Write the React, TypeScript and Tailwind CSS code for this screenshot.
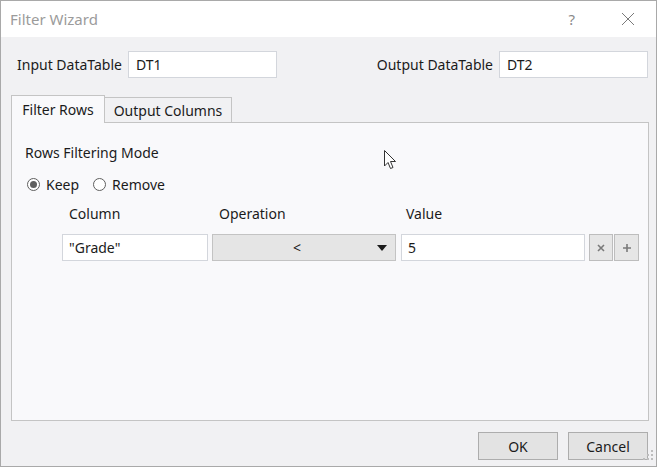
import React from "react";

const font = { fontFamily: '"Noto Sans", "Open Sans", sans-serif' };

function Radio({ checked, label }: { checked?: boolean; label: string }) {
  return (
    <div className="flex items-center gap-[6px]">
      <span className="w-[13px] h-[13px] rounded-full border border-[#5f5f5f] bg-white flex items-center justify-center">
        {checked && <span className="w-[7px] h-[7px] rounded-full bg-[#5f5f5f]" />}
      </span>
      <span>{label}</span>
    </div>
  );
}

export default function App() {
  return (
    <div
      className="w-[660px] h-[468px] bg-white relative overflow-hidden text-[14px] text-[#1b1b1b]"
      style={font}
    >
      <div className="w-[657px] h-[467px] border border-[#a9a9a9] flex flex-col bg-[#f1f1f3]">
        {/* Title bar */}
        <div className="h-[36px] bg-white flex items-center shrink-0">
          <span className="ml-[9px] text-[15px] text-[#9b9b9b]">Filter Wizard</span>
          <span className="ml-auto mr-[46px] text-[15px] text-[#8a8a8a]">?</span>
          <svg width="14" height="14" viewBox="0 0 14 14" className="mr-[21px]">
            <path d="M1 1 L13 13 M13 1 L1 13" stroke="#7a7a7a" strokeWidth="1" />
          </svg>
        </div>
        {/* Body */}
        <div className="flex-1 flex flex-col pl-[10px] pr-[7px] pt-[14px]">
          <div className="flex items-center justify-between pl-[6px]">
            <div className="flex items-center gap-[6px]">
              <span>Input DataTable</span>
              <div className="w-[149px] h-[27px] bg-white border border-[#d3d6dc] flex items-center px-[7px]">DT1</div>
            </div>
            <div className="flex items-center gap-[6px] mr-[1px]">
              <span>Output DataTable</span>
              <div className="w-[149px] h-[27px] bg-white border border-[#d3d6dc] flex items-center px-[7px]">DT2</div>
            </div>
          </div>
          {/* Tabs */}
          <div className="mt-[16px] flex items-end h-[28px]">
            <div className="h-[28px] w-[94px] bg-[#f9f9fb] border border-[#c4c4c4] border-b-0 flex items-center justify-center relative z-10 mb-[-1px] pb-[1px]">
              Filter Rows
            </div>
            <div className="h-[25px] w-[127px] bg-[#f1f1f3] border border-[#c4c4c4] border-b-0 border-l-0 flex items-center justify-center">
              Output Columns
            </div>
          </div>
          <div className="h-[299px] bg-[#f9f9fb] border border-[#c4c4c4] pl-[13px] pt-[20px]">
            <div className="h-[20px] leading-[20px]">Rows Filtering Mode</div>
            <div className="mt-[11px] flex items-center gap-[14px] h-[20px] pl-[2px]">
              <Radio checked label="Keep" />
              <Radio label="Remove" />
            </div>
            <div className="mt-[10px] grid grid-cols-[146px_184px_185px_24px_24px] gap-x-[4px] pl-[37px]">
              <div className="h-[20px] leading-[20px] pl-[7px]">Column</div>
              <div className="h-[20px] leading-[20px] pl-[7px]">Operation</div>
              <div className="h-[20px] leading-[20px] pl-[5px] ml-[1px]">Value</div>
              <div />
              <div />
              <div className="mt-[10px] h-[27px] bg-white border border-[#d3d6dc] flex items-center px-[6px]">"Grade"</div>
              <div className="mt-[10px] h-[27px] bg-[#e5e5e5] border border-[#c3c3c3] flex items-center relative">
                <span className="flex-1 text-center pl-[4px]">&lt;</span>
                <svg width="10" height="6" viewBox="0 0 10 6" className="mr-[8px]">
                  <path d="M0 0 L10 0 L5 6 Z" fill="#1b1b1b" />
                </svg>
              </div>
              <div className="mt-[10px] h-[27px] bg-white border border-[#d3d6dc] flex items-center px-[6px] ml-[1px]">5</div>
              <div className="mt-[10px] h-[27px] bg-[#e6e6e6] border border-[#bdbdbd] flex items-center justify-center">
                <svg width="8" height="8" viewBox="0 0 8 8">
                  <path d="M1 1 L7 7 M7 1 L1 7" stroke="#7a7a7a" strokeWidth="1.6" />
                </svg>
              </div>
              <div className="mt-[10px] h-[27px] bg-[#e6e6e6] border border-[#bdbdbd] flex items-center justify-center ml-[-3px] mr-[2px]">
                <svg width="10" height="10" viewBox="0 0 10 10">
                  <path d="M5 1 L5 9 M1 5 L9 5" stroke="#7a7a7a" strokeWidth="1.6" />
                </svg>
              </div>
            </div>
          </div>
          {/* Footer */}
          <div className="mt-[11px] flex justify-end gap-[10px] pr-[1px]">
            <button className="w-[80px] h-[28px] bg-[#e3e3e3] border border-[#adadad] flex items-center justify-center">OK</button>
            <button className="w-[80px] h-[28px] bg-[#e3e3e3] border border-[#adadad] flex items-center justify-center">Cancel</button>
          </div>
        </div>
      </div>
      {/* resize grip */}
      <svg width="12" height="12" viewBox="0 0 12 12" className="absolute left-[642px] top-[449px]">
        <rect x="9" y="1" width="2" height="2" fill="#bdbdbd" />
        <rect x="5" y="5" width="2" height="2" fill="#bdbdbd" />
        <rect x="9" y="5" width="2" height="2" fill="#bdbdbd" />
        <rect x="1" y="9" width="2" height="2" fill="#bdbdbd" />
        <rect x="5" y="9" width="2" height="2" fill="#bdbdbd" />
        <rect x="9" y="9" width="2" height="2" fill="#bdbdbd" />
      </svg>
      {/* mouse cursor */}
      <svg width="14" height="20" viewBox="0 0 14 20" className="absolute left-[384px] top-[150px]">
        <path d="M0.5 0.5 L0.5 16 L4 12.5 L6.5 18.5 L9 17.5 L6.5 11.5 L11.5 11.5 Z" fill="white" stroke="#333" strokeWidth="1" strokeLinejoin="round" />
      </svg>
    </div>
  );
}
